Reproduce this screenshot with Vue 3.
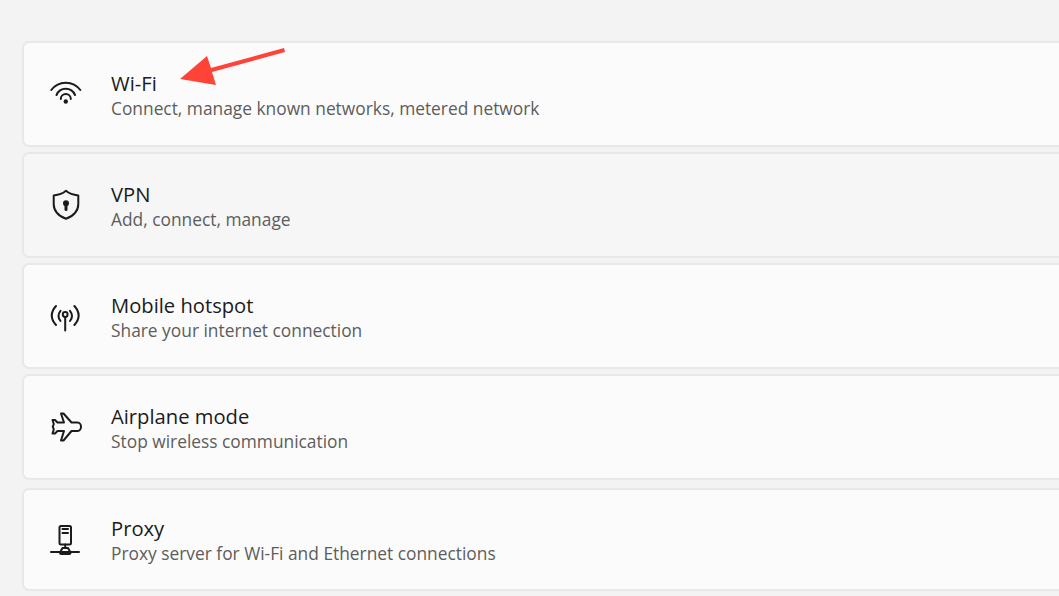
<template>
  <div class="page">
    <div class="list">
      <div
        v-for="item in items"
        :key="item.title"
        class="card"
        :class="{ 'card--hover': item.hover, 'card--last': item.last }"
      >
        <div class="card__icon">
          <svg v-if="item.icon == 'wifi'" width="32" height="32" viewBox="0 0 32 32" fill="none">
            <path d="M1.300 12A18 18 0 0 1 30.300 12M6.500 17A10 10 0 0 1 25 17M10.800 21A5 5 0 0 1 20.800 21" class="stroke" />
            <circle cx="15.800" cy="23.500" r="2.200" fill="#1b1b1b" />
          </svg>
          <svg v-else-if="item.icon == 'shield'" width="32" height="32" viewBox="0 0 32 32" fill="none">
            <path d="M16 1.800C19 4.500 23.500 6 28.300 6.500V15C28.300 22.500 22.500 27.300 16 29.800C9.500 27.300 3.700 22.500 3.700 15V6.500C8.500 6 13 4.500 16 1.800Z" class="stroke" />
            <circle cx="16" cy="14.200" r="3" fill="#1b1b1b" />
            <path d="M16 15V20.500" stroke="#1b1b1b" stroke-width="3" stroke-linecap="round" />
          </svg>
          <svg v-else-if="item.icon == 'hotspot'" width="32" height="32" viewBox="0 0 32 32" fill="none">
            <path d="M6 6Q-2.500 15.500 6 25M24.400 6Q32.900 15.500 24.400 25M10.500 10.800Q6.500 16 10.500 21M20 10.800Q24 16 20 21" class="stroke" />
            <circle cx="15.200" cy="14.500" r="2.400" class="stroke" />
            <path d="M15.200 17V30.500" class="stroke" />
          </svg>
          <svg v-else-if="item.icon == 'plane'" width="32" height="32" viewBox="0 0 32 32" fill="none">
            <path d="M11 2.500H13.500L21.500 11.500H27.500C30 11.500 31 14 31 15.700C31 17.500 30 20 27.500 20H21.500L13.500 29.500H11L14 20H7.500L5 22.500H2.500L3.800 18.500L2.800 15.700L3.800 13L2.500 9H5L7.500 11.500H14Z" class="stroke" />
          </svg>
          <svg v-else width="32" height="32" viewBox="0 0 32 32" fill="none">
            <rect x="9.500" y="2" width="11.500" height="18.500" rx="1.500" class="stroke" />
            <path d="M12.500 5H18M12.500 9H18M15.200 20.500V24M1 28H29" class="stroke" />
            <path d="M12.500 24H18L20.500 28.500C20.500 29.500 20 30 19 30H11.500C10.500 30 10 29.500 10 28.500Z" class="stroke" />
          </svg>
        </div>
        <div class="card__text">
          <div class="card__title">{{ item.title }}</div>
          <div class="card__desc">{{ item.desc }}</div>
        </div>
      </div>
    </div>
    <svg class="arrow" width="120" height="50" viewBox="0 0 120 50">
      <path d="M0 38L27 15L31 27L104 7L105 11L32 31L36 44Z" fill="#ff4336" />
    </svg>
  </div>
</template>
<script setup>
const items = [
  { icon: "wifi", title: "Wi-Fi", desc: "Connect, manage known networks, metered network" },
  { icon: "shield", title: "VPN", desc: "Add, connect, manage", hover: true },
  { icon: "hotspot", title: "Mobile hotspot", desc: "Share your internet connection" },
  { icon: "plane", title: "Airplane mode", desc: "Stop wireless communication" },
  { icon: "proxy", title: "Proxy", desc: "Proxy server for Wi-Fi and Ethernet connections", last: true },
];
</script>
<style>
body {
  background: #f3f3f3;
}
</style>
<style scoped>
.page {
  position: relative;
  width: 1059px;
  height: 596px;
  overflow: hidden;
  background: #f3f3f3;
  font-family: "Open Sans", "Noto Sans", sans-serif;
}
.list {
  display: flex;
  flex-direction: column;
  gap: 5px;
  padding-top: 41px;
  padding-left: 22px;
  width: 1060px;
}
.card {
  display: flex;
  align-items: center;
  gap: 29px;
  height: 106px;
  box-sizing: border-box;
  padding-left: 26px;
  background: #fbfbfb;
  border: 2px solid #e8e8e8;
  border-right: none;
  border-radius: 7px 0 0 7px;
}
.card--hover {
  background: #f6f6f6;
}
.card--last {
  margin-top: 3px;
  height: 103px;
}
.card__icon {
  display: flex;
  width: 32px;
  height: 32px;
}
.card__text {
  padding-top: 3px;
}
.card__title {
  font-size: 20.200px;
  line-height: 25px;
  color: #1b1b1b;
}
.card__desc {
  font-size: 17.350px;
  line-height: 25px;
  color: #5d5d5d;
}
.stroke {
  stroke: #1b1b1b;
  stroke-width: 2;
  stroke-linecap: round;
  stroke-linejoin: round;
}
.arrow {
  position: absolute;
  left: 180px;
  top: 41px;
}
</style>
